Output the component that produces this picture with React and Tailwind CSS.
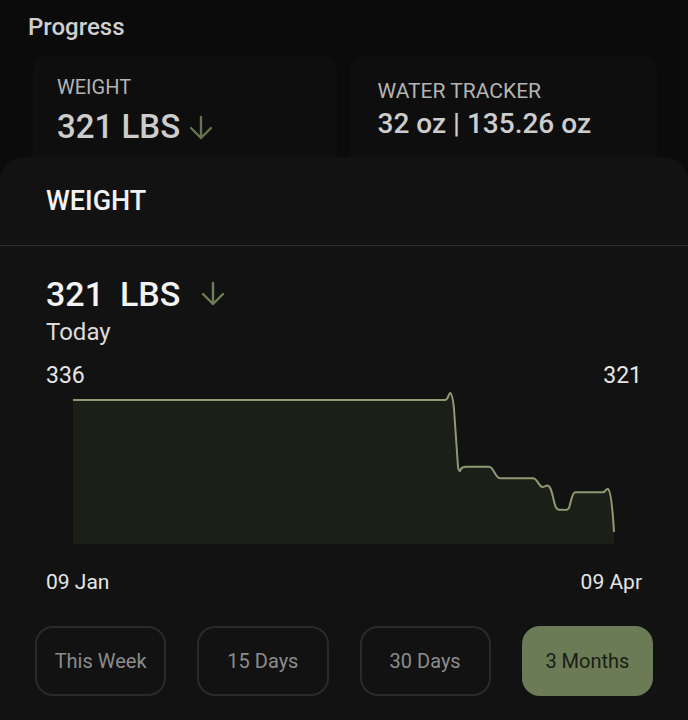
import React from "react";

const line =
  "M0,11 L372,11 C375,11 376,4 377,4 C379,4 380,10 381,20 L385,78 C386,83 387,83 388,80 C389,78 390,77.7 393,77.7 L416,77.7 C419,77.7 421,83 423,86 C425,89 426,89.3 429,89.3 L460,89.3 C464,89.3 466,97 469,98 C471,98.3 473,96 475,96.7 C477,97 478,100 480,108 C482,117 483,120.7 486,120.7 L490,120.7 C493,120.7 494,122 496,119 C498,113 499,104 502,103.3 L530,103.3 C532,103.3 533,99 535,100 C537,101 539,110 541,143";

const ranges = ["This Week", "15 Days", "30 Days", "3 Months"];

const DownArrow = ({ className }) => (
  <svg width="26" height="26" viewBox="0 0 26 26" className={className}>
    <path
      d="M13 2v21 M3 13l10 10 10-10"
      fill="none"
      stroke="currentColor"
      strokeWidth="2.4"
      strokeLinecap="round"
      strokeLinejoin="round"
    />
  </svg>
);

const WeightChart = () => (
  <svg width="542" height="155" viewBox="0 0 542 155" className="ml-[27px] block">
    <path d={`${line} L541,155 L0,155 Z`} fill="#1c1e18" />
    <path d={line} fill="none" stroke="#8e9a72" strokeWidth="2" strokeLinejoin="round" />
  </svg>
);

export default function App() {
  return (
    <div className="min-h-[720px] bg-[#0b0b0b] font-['Roboto',sans-serif] overflow-hidden">
      <div className="pl-[28px] pt-[12px] text-[24px] leading-[30px] font-medium text-[#cfcfcf]">
        Progress
      </div>

      <div className="mt-[13px] flex gap-[13px] pl-[33px] pr-[31px]">
        <div className="flex-1 h-[102px] rounded-t-[14px] bg-[#0e0e0e] pl-6 pt-[20px]">
          <div className="text-[20px] leading-[24px] text-[#b4b4b4]">WEIGHT</div>
          <div className="mt-[10px] flex items-center gap-[8px] text-[33px] leading-[36px] font-medium text-[#cdcdcd]">
            <span>321 LBS</span>
            <DownArrow className="text-[#66754f] mt-[2px]" />
          </div>
        </div>
        <div className="flex-1 h-[102px] rounded-t-[14px] bg-[#0e0e0e] pl-7 pt-[24px]">
          <div className="text-[21px] leading-[24px] text-[#b4b4b4]">WATER TRACKER</div>
          <div className="mt-[4px] text-[28px] leading-[34px] font-medium text-[#cdcdcd]">
            32 oz | 135.26 oz
          </div>
        </div>
      </div>

      <div className="rounded-t-[24px] bg-[#121212] pb-[40px]">
        <div className="flex h-[89px] items-center border-b border-[#2f2f2f] px-[46px] text-[27px] font-medium text-[#f2f2f2]">
          WEIGHT
        </div>

        <div className="px-[46px]">
          <div className="pt-[28px] flex items-center text-[34px] leading-[40px] font-medium text-[#f4f4f4]">
            <span>321</span>
            <span className="ml-[16px]">LBS</span>
            <DownArrow className="ml-[20px] text-[#6f7e58]" />
          </div>
          <div className="mt-[3px] text-[24px] leading-[30px] text-[#dcdcdc]">Today</div>
          <div className="mt-[16px] flex justify-between text-[23px] leading-[26px] text-[#e6e6e6]">
            <span>336</span>
            <span>321</span>
          </div>
        </div>

        <div className="px-[46px]">
          <WeightChart />
          <div className="mt-[24px] flex justify-between text-[21px] leading-[28px] text-[#e6e6e6]">
            <span>09 Jan</span>
            <span>09 Apr</span>
          </div>
        </div>

        <div className="mt-[30px] grid grid-cols-4 gap-[31px] px-[35px]">
          {ranges.map((r) => {
            const active = r === "3 Months";
            return (
              <button
                key={r}
                type="button"
                className={
                  active
                    ? "h-[70px] rounded-[18px] bg-[#6b7b55] text-[20px] text-[#1a1e15]"
                    : "h-[70px] rounded-[18px] border-2 border-[#2a2a2a] text-[20px] text-[#8c8c8c]"
                }
              >
                {r}
              </button>
            );
          })}
        </div>
      </div>
    </div>
  );
}
